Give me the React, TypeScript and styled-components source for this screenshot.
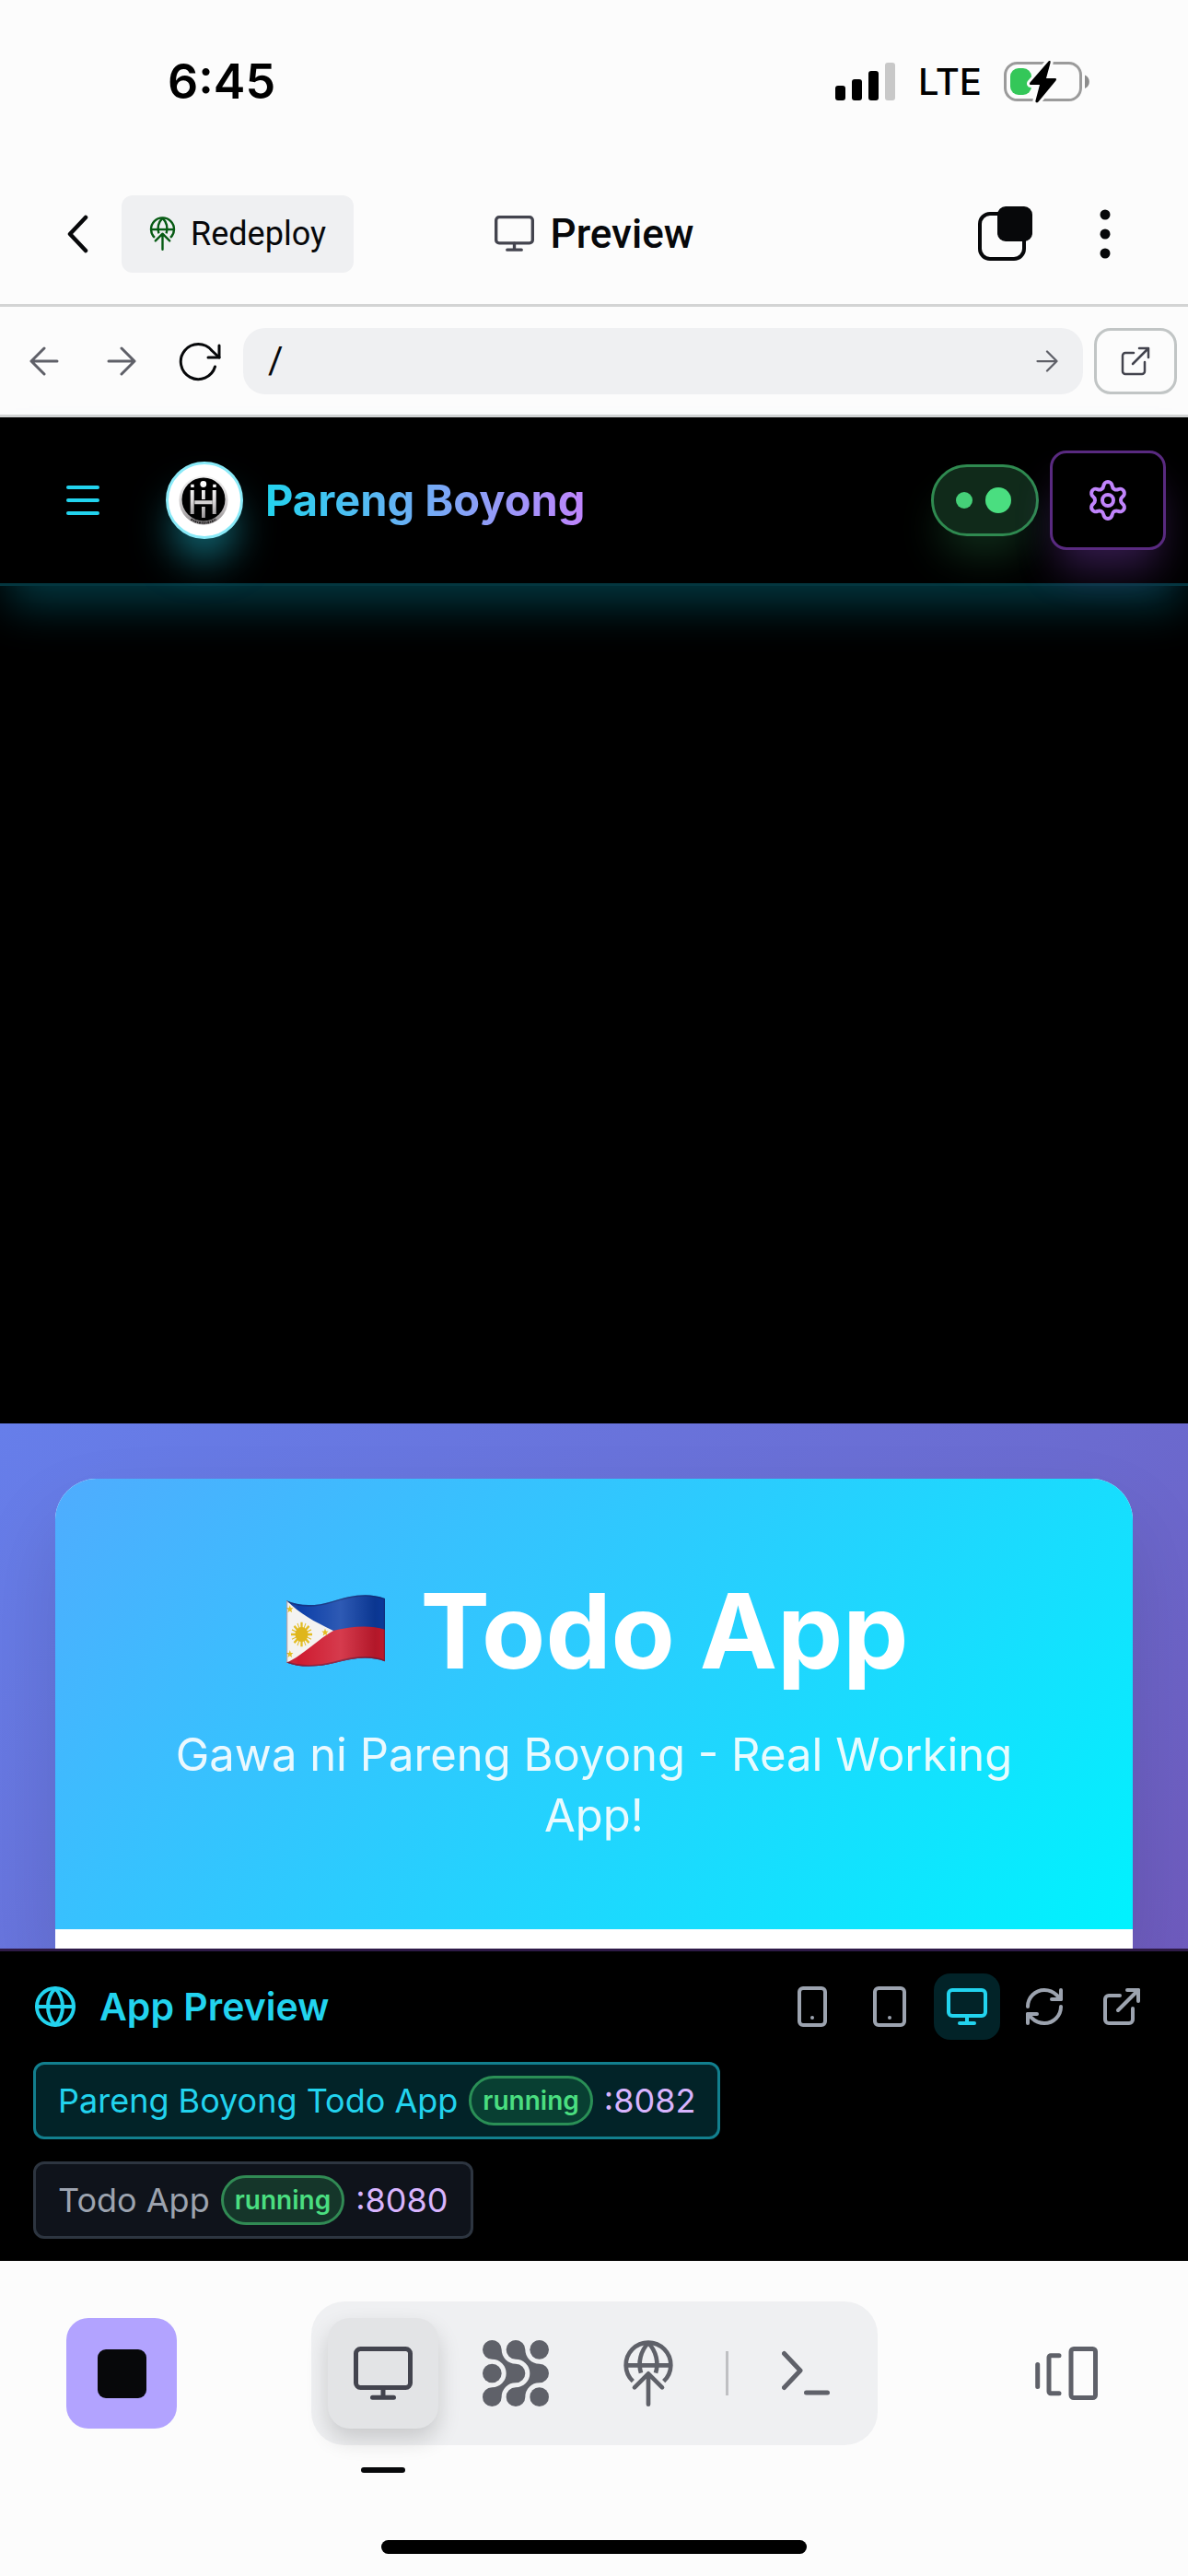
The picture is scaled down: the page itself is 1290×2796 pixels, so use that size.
import React from "react";
import styled, { createGlobalStyle, css } from "styled-components";
import { ExternalLink, Globe, Menu, Monitor, RefreshCw, Settings, Smartphone, Tablet } from "lucide-react";

const color = {
  surface: "#fcfcfc",
  soft: "#eff0f2",
  ink: "#07080a",
  icon: "#43444e",
  muted: "#5f6068",
  rule: "#d3d4d4",
  cyan: "#22d3ee",
  purple: "#c084fc",
  green: "#4ade80",
  gray: "#9ca3af",
};

const GlobalStyle = createGlobalStyle`
  *, *::before, *::after { box-sizing: border-box; }
  body { margin: 0; background: ${color.surface}; font-family: Inter, "Liberation Sans", sans-serif; }
  h1, h2, p { margin: 0; }
  button, input { font: inherit; color: inherit; }
  svg { display: block; flex: none; }
`;

const Page = styled.div`
  min-height: 100vh;
  display: flex;
  flex-direction: column;
`;

const plainButton = css`
  display: inline-flex;
  align-items: center;
  justify-content: center;
  padding: 0;
  border: 0;
  background: none;
  cursor: pointer;
`;

/* ---------- Phone status bar ---------- */

const StatusBar = styled.div`
  display: flex;
  align-items: center;
  justify-content: space-between;
  min-height: 177px;
  padding: 0 106px 0 182px;
  color: #000;
`;

const Clock = styled.time`
  font-size: 52px;
  line-height: 60px;
  font-weight: 600;
`;

const StatusIcons = styled.div`
  display: flex;
  align-items: center;
  gap: 24px;
`;

const Carrier = styled.span`
  font-size: 40px;
  line-height: 48px;
  font-weight: 500;
`;

/* ---------- Workspace bar ---------- */

const AppBar = styled.header`
  display: grid;
  grid-template-columns: 1fr auto 1fr;
  align-items: center;
  min-height: 156px;
  padding: 0 36px;
  border-bottom: 3px solid ${color.rule};
  color: ${color.ink};
  font-family: Roboto, "Liberation Sans", sans-serif;
`;

const BarSide = styled.div<{ $end?: boolean }>`
  display: flex;
  align-items: center;
  justify-content: ${(p) => (p.$end ? "flex-end" : "flex-start")};
`;

const BarButton = styled.button<{ $wide?: boolean }>`
  ${plainButton}
  width: ${(p) => (p.$wide ? "108px" : "96px")};
  height: 84px;
`;

const RedeployButton = styled.button`
  ${plainButton}
  gap: 10px;
  height: 84px;
  padding: 0 30px 0 24px;
  border-radius: 12px;
  background: ${color.soft};
  font-size: 36px;
  line-height: 48px;
`;

const BarTitle = styled.h1`
  display: flex;
  align-items: center;
  gap: 18px;
  font-size: 44px;
  line-height: 48px;
  font-weight: 500;

  svg {
    color: ${color.icon};
  }
`;

/* ---------- Address bar ---------- */

const AddressBar = styled.form`
  display: flex;
  align-items: center;
  min-height: 120px;
  padding: 0 12px 0 6px;
  border-bottom: 3px solid ${color.rule};
  color: ${color.muted};
`;

const NavButton = styled.button<{ $strong?: boolean }>`
  ${plainButton}
  width: 84px;
  height: 72px;
  color: ${(p) => (p.$strong ? color.ink : color.muted)};
`;

const AddressField = styled.div`
  flex: 1;
  display: flex;
  align-items: center;
  height: 72px;
  margin: 0 12px 0 6px;
  padding: 0 24px 0 27px;
  border-radius: 24px;
  background: ${color.soft};
`;

const AddressInput = styled.input`
  flex: 1;
  min-width: 0;
  padding: 0;
  border: 0;
  outline: 0;
  background: none;
  color: ${color.ink};
  font-family: Roboto, "Liberation Sans", sans-serif;
  font-size: 40px;
  line-height: 48px;
`;

const GoButton = styled.button`
  ${plainButton}
  width: 30px;
  height: 48px;
`;

const OpenLink = styled.a`
  display: flex;
  align-items: center;
  justify-content: center;
  width: 90px;
  height: 72px;
  border: 3px solid #c1c5c5;
  border-radius: 18px;
  color: ${color.icon};
`;

/* ---------- Previewed app ---------- */

const Preview = styled.main`
  flex: 1;
  display: flex;
  flex-direction: column;
  background: #000;
`;

const ChatHeader = styled.div`
  position: relative;
  z-index: 1;
  display: flex;
  align-items: center;
  min-height: 183px;
  padding: 0 24px 0 36px;
  border-bottom: 3px solid #04363f;
  box-shadow: 0 30px 45px -9px rgba(6, 182, 212, 0.3);
`;

const MenuButton = styled.button`
  ${plainButton}
  width: 108px;
  height: 108px;
  margin-right: 36px;
  color: ${color.cyan};
`;

const Avatar = styled.div`
  width: 84px;
  height: 84px;
  border: 3px solid #8aeaf8;
  border-radius: 50%;
  background: #fff;
  box-shadow: 0 30px 45px -9px rgba(34, 211, 238, 0.55);
`;

const Brand = styled.h2`
  margin-left: 24px;
  background: linear-gradient(90deg, ${color.cyan}, ${color.purple});
  background-clip: text;
  -webkit-background-clip: text;
  color: transparent;
  font-size: 47px;
  line-height: 60px;
  font-weight: 700;
`;

const StatusPill = styled.div`
  display: flex;
  align-items: center;
  gap: 14px;
  height: 78px;
  margin-left: auto;
  padding: 0 27px 0 24px;
  border: 3px solid #2f8a50;
  border-radius: 39px;
  background: #102a1a;
  box-shadow: 0 30px 45px -9px rgba(74, 222, 128, 0.2);
`;

const Dot = styled.span<{ $size: number }>`
  width: ${(p) => p.$size}px;
  height: ${(p) => p.$size}px;
  border-radius: 50%;
  background: ${color.green};
  opacity: ${(p) => (p.$size < 20 ? 0.92 : 1)};
`;

const SettingsButton = styled.button`
  ${plainButton}
  width: 126px;
  height: 108px;
  margin-left: 12px;
  border: 3px solid #592a80;
  border-radius: 18px;
  background: #000;
  color: ${color.purple};
  box-shadow: 0 30px 45px -9px rgba(168, 85, 247, 0.3);
`;

const ChatArea = styled.div`
  flex: 1;
`;

const TodoFrame = styled.section`
  padding: 60px 60px 0;
  overflow: hidden;
  background: linear-gradient(135deg, #667eea 0, #6b6bd0 850px, #6f5abd 1350px);
`;

const TodoCard = styled.div`
  overflow: hidden;
  border-radius: 45px 45px 0 0;
  background: #fff;
  box-shadow: 0 45px 90px rgba(0, 0, 0, 0.12);
`;

const TodoHero = styled.div`
  padding: 90px;
  background: linear-gradient(135deg, #4facfe, #00f2fe);
  color: #fff;
  text-align: center;
`;

const TodoTitle = styled.h2`
  display: flex;
  align-items: center;
  justify-content: center;
  gap: 30px;
  margin-bottom: 27px;
  font-size: 113px;
  line-height: 150px;
  font-weight: 700;
`;

const TodoSubtitle = styled.p`
  font-size: 49px;
  line-height: 66px;
  opacity: 0.9;
`;

const TodoBody = styled.div`
  height: 21px;
`;

/* ---------- App preview panel ---------- */

const Panel = styled.section`
  padding: 24px 36px;
  border-top: 3px solid #2e1a47;
  background: #000;
`;

const PanelHeader = styled.div`
  display: flex;
  align-items: center;
  justify-content: space-between;
  margin-bottom: 24px;
`;

const PanelTitle = styled.h2`
  display: flex;
  align-items: center;
  gap: 24px;
  color: ${color.cyan};
  font-size: 41px;
  line-height: 48px;
  font-weight: 600;
`;

const Tools = styled.div`
  display: flex;
  gap: 12px;
`;

const Tool = styled.button<{ $active?: boolean }>`
  ${plainButton}
  width: 72px;
  height: 72px;
  border-radius: 18px;
  background: ${(p) => (p.$active ? "#022328" : "none")};
  color: ${(p) => (p.$active ? color.cyan : color.gray)};
`;

const AppList = styled.div`
  display: flex;
  flex-direction: column;
  align-items: flex-start;
  gap: 24px;
`;

const AppTab = styled.button<{ $active?: boolean }>`
  ${plainButton}
  gap: 12px;
  height: 84px;
  padding: 0 24px;
  border: 3px solid ${(p) => (p.$active ? "#127f8e" : "#2d3540")};
  border-radius: 12px;
  background: ${(p) => (p.$active ? "#022328" : "#0f131b")};
  color: ${(p) => (p.$active ? color.cyan : color.gray)};
  font-size: 36px;
  line-height: 48px;
`;

const RunBadge = styled.span<{ $active?: boolean }>`
  display: inline-flex;
  align-items: center;
  height: 54px;
  padding: 0 12px;
  border: 3px solid ${(p) => (p.$active ? "#2a8f56" : "#318a54")};
  border-radius: 27px;
  background: ${(p) => (p.$active ? "#083f32" : "#15362a")};
  color: ${color.green};
  font-size: 28px;
  line-height: 36px;
  font-weight: 600;
`;

const Port = styled.span`
  color: #d8b4fe;
`;

/* ---------- Bottom dock ---------- */

const BottomBar = styled.nav`
  display: flex;
  align-items: center;
  justify-content: space-between;
  padding: 44px 72px 0;
`;

const StopButton = styled.button`
  ${plainButton}
  width: 120px;
  height: 120px;
  border-radius: 24px;
  background: #b2a3ff;
`;

const StopMark = styled.span`
  width: 53px;
  height: 53px;
  border-radius: 9px;
  background: ${color.ink};
`;

const Dock = styled.div`
  display: flex;
  align-items: center;
  gap: 24px;
  padding: 18px;
  border-radius: 36px;
  background: ${color.soft};
`;

const DockButton = styled.button<{ $active?: boolean }>`
  ${plainButton}
  position: relative;
  width: 120px;
  height: 120px;
  border-radius: 24px;
  color: ${(p) => (p.$active ? color.icon : "#5f6169")};
  ${(p) =>
    p.$active &&
    css`
      background: #e3e4e6;
      box-shadow: 0 12px 24px rgba(0, 0, 0, 0.16);
      &::after {
        content: "";
        position: absolute;
        top: 162px;
        left: 36px;
        width: 48px;
        height: 6px;
        border-radius: 3px;
        background: ${color.ink};
      }
    `}
`;

const DockRule = styled.span`
  width: 3px;
  height: 48px;
  background: #bfc0c3;
`;

const HomeArea = styled.footer`
  display: flex;
  justify-content: center;
  padding: 103px 0 24px;
`;

const HomeIndicator = styled.span`
  width: 462px;
  height: 15px;
  border-radius: 8px;
  background: #000;
`;

/* ---------- Drawings ---------- */

const SignalIcon = () => (
  <svg width="66" height="42" viewBox="0 0 66 42" aria-label="Signal">
    <rect x="0" y="25" width="11" height="16" rx="3" />
    <rect x="18" y="18" width="11" height="23" rx="3" />
    <rect x="36" y="9" width="11" height="32" rx="3" />
    <rect x="54" y="0" width="11" height="41" rx="3" fill="#c8c8c8" />
  </svg>
);

const BatteryIcon = () => (
  <svg width="94" height="46" viewBox="0 0 94 46" aria-label="Battery charging">
    <rect x="1.5" y="2.5" width="82" height="40" rx="13" fill="none" stroke="#9b9b9b" strokeWidth="3" />
    <path d="M88 15.500c6.500 2.500 6.500 12 0 14.500z" fill="#8c8c8c" />
    <rect x="7" y="8" width="23" height="29" rx="9" fill="#34c759" />
    <path
      d="M49 0 28.500 23.500c-1 1.500-.5 2.500 1 2.500H39L34.500 43c-.5 2.500 1.500 3 3 1.500L56.500 21.500c1-1.500.5-2.500-1-2.500H46L50.500 2.500C51 0 50-1 49 0z"
      stroke={color.surface}
      strokeWidth="6"
      paintOrder="stroke"
    />
  </svg>
);

const ChevronIcon = () => (
  <svg width="24" height="42" viewBox="0 0 24 42" fill="none" stroke="currentColor" strokeWidth="4.500" strokeLinecap="round" strokeLinejoin="round">
    <path d="M21 3 4 21l17 18" />
  </svg>
);

const DeployIcon = ({ size }: { size: number }) => (
  <svg width={size} height={size} viewBox="0 0 240 240" fill="none" stroke="currentColor" strokeWidth="14" strokeLinecap="butt">
    <path d="M70 146A73 73 0 1 1 170 146" />
    <path d="M47 94h146" />
    <path d="M120 21C94 48 86 86 96 119M120 21c26 27 34 65 24 98" />
    <path d="M75 166l45-45 45 45M120 122v99" strokeLinecap="round" strokeLinejoin="round" />
  </svg>
);

const ScreenIcon = ({ width }: { width: number }) => (
  <svg width={width} viewBox="0 0 64 58" fill="none" stroke="currentColor" strokeWidth="5" strokeLinecap="round">
    <rect x="2.500" y="2.500" width="59" height="42" rx="5" />
    <path d="M32 45v10M20.500 55.300h23" />
  </svg>
);

const WindowsIcon = () => (
  <svg width="60" height="60" viewBox="0 0 60 60">
    <rect x="2" y="8" width="48" height="49" rx="11" fill="none" stroke="currentColor" strokeWidth="4" />
    <rect x="21" y="0" width="38" height="38" rx="9" fill="currentColor" />
  </svg>
);

const DotsIcon = () => (
  <svg width="12" height="54" viewBox="0 0 12 54" fill="currentColor">
    <circle cx="6" cy="6" r="5.500" />
    <circle cx="6" cy="27" r="5.500" />
    <circle cx="6" cy="48" r="5.500" />
  </svg>
);

const ArrowIcon = ({ size, back }: { size: number; back?: boolean }) => (
  <svg width={size} height={size} viewBox="0 0 32 32" fill="none" stroke="currentColor" strokeWidth="3" strokeLinecap="round" strokeLinejoin="round">
    <path d={back ? "M30 16H2M16 2 2 16l14 14" : "M2 16h28M16 2l14 14-14 14"} />
  </svg>
);

const ReloadIcon = () => (
  <svg width="50" height="44" viewBox="-4 0 50 44" fill="none" stroke="currentColor" strokeWidth="3" strokeLinecap="round" strokeLinejoin="round">
    <path d="M38.500 28A19 19 0 1 1 35 10.500L43 18" />
    <path d="M43 5v13H31" />
  </svg>
);

const OpenIcon = () => (
  <svg width="32" height="32" viewBox="0 0 32 32" fill="none" stroke="currentColor" strokeWidth="2.500" strokeLinecap="round" strokeLinejoin="round">
    <path d="M14 7H5a3 3 0 0 0-3 3v17a3 3 0 0 0 3 3h18a3 3 0 0 0 3-3V17" />
    <path d="M20 2h10v10M30 2 13 19" />
  </svg>
);

const LogoMark = () => (
  <svg width="78" height="78" viewBox="3 3 78 78" role="img" aria-label="Pareng Boyong logo">
    <defs>
      <linearGradient id="rim" x1="0" y1="0" x2="0" y2="1">
        <stop offset="0" stopColor="#f4f4f4" />
        <stop offset="0.600" stopColor="#c9c6c7" />
        <stop offset="1" stopColor="#8d898b" />
      </linearGradient>
      <linearGradient id="bars" gradientUnits="userSpaceOnUse" x1="0" y1="24" x2="0" y2="61">
        <stop offset="0" stopColor="#fff" />
        <stop offset="0.500" stopColor="#dcd9da" />
        <stop offset="1" stopColor="#9a9698" />
      </linearGradient>
    </defs>
    <circle cx="41" cy="42" r="26.500" fill="url(#rim)" />
    <circle cx="41" cy="41" r="23.500" fill="#000" />
    <path d="M27.500 62.500A25 25 0 0 0 54.500 62.500" fill="none" stroke="#2a2829" strokeWidth="2.500" strokeDasharray="2 0.700 1.300 0.600" />
    <g fill="url(#bars)">
      <path d="M26.700 31h4v26h-4zM50.700 31h4v26h-4zM39 31h3.800v10H39z" />
      <path d="M31.300 42.300h19.400v4H31.300zM39 49h3.800v12H39z" />
      <path d="M27.200 24.700h3.500V28h-3.500zM51.200 24.700h3.500V28h-3.500z" />
      <circle cx="40.800" cy="24.500" r="3.400" />
    </g>
  </svg>
);

const starPath = "M0-3.600 1-1.100 3.600-1 1.600.7 2.300 3.200 0 1.800-2.300 3.200-1.600.7-3.600-1-1-1.100z";

const FlagIcon = () => (
  <svg width="123" height="78" viewBox="-8 0 123 68" preserveAspectRatio="none" role="img" aria-label="Flag of the Philippines">
    <defs>
      <linearGradient id="shade">
        <stop offset="0" stopColor="#000" stopOpacity="0.180" />
        <stop offset="0.120" stopColor="#fff" stopOpacity="0" />
        <stop offset="0.550" stopColor="#fff" stopOpacity="0.140" />
        <stop offset="0.900" stopColor="#000" stopOpacity="0.140" />
        <stop offset="1" stopColor="#000" stopOpacity="0.080" />
      </linearGradient>
      <clipPath id="flagShape">
        <path d="M0 5.500C14 11 32 11 50 6 68 1 88-3 107 3.500V63C90 57 70 60 52 64.500 34 68.500 14 69 0 64z" />
      </clipPath>
    </defs>
    <g clipPath="url(#flagShape)">
      <path d="M0 0h107v68H0z" fill="#0c3fa8" />
      <path d="M0 40 50 34C70 30 90 28 107 33v35H0z" fill="#cf1b30" />
      <path d="M0 0h107v68H0z" fill="url(#shade)" />
      <path d="M0 5C14 18 30 25 51 34 34 42 20 56 0 64.500z" fill="#f4f3f1" />
      <g stroke="#e3bd24" strokeWidth="2.300">
        <path d="M16.500 26v23M5 37.500h23M8.500 29.500l16 16M24.500 29.500l-16 16" />
        <path d="M12 27l9 21M21 27l-9 21M6 33l21 9M27 33 6 42" strokeWidth="1" />
      </g>
      <circle cx="16.500" cy="37.500" r="7" fill="#dfb61c" />
      <g fill="#e3bd24">
        <path transform="translate(3.800 13.500)" d={starPath} />
        <path transform="translate(42 35.500)" d={starPath} />
        <path transform="translate(3.800 56)" d={starPath} />
      </g>
      <path d="M0 5.500C14 11 32 11 50 6 68 1 88-3 107 3.500V63C90 57 70 60 52 64.500 34 68.500 14 69 0 64z" fill="none" stroke="#1a1a40" strokeOpacity="0.350" strokeWidth="2.500" />
    </g>
  </svg>
);

const strand = "M62 31A46 46 0 0 0 108 77 31 31 0 0 1 108 139 46 46 0 0 0 62 185 31 31 0 1 1 31 154 46 46 0 0 0 31 62 31 31 0 1 1 62 31z";

const AgentIcon = () => (
  <svg width="72" height="72" viewBox="0 0 216 216" fill="currentColor">
    <path d={strand} />
    <path d={strand} transform="translate(77 0)" />
    <circle cx="185" cy="31" r="31" />
    <circle cx="31" cy="108" r="31" />
    <circle cx="185" cy="185" r="31" />
  </svg>
);

const ShellIcon = () => (
  <svg width="52" height="52" viewBox="0 0 52 52" fill="none" stroke="currentColor" strokeWidth="5" strokeLinecap="round" strokeLinejoin="round">
    <path d="M2.500 4.500 20 23 2.500 41.500M26.500 47h23" />
  </svg>
);

const PanesIcon = () => (
  <svg width="68" height="58" viewBox="0 0 68 58" fill="none" stroke="currentColor" strokeWidth="5" strokeLinecap="round" strokeLinejoin="round">
    <path d="M2.700 19.500v24M26 9.700H17a2 2 0 0 0-2 2v37a2 2 0 0 0 2 2h9" />
    <rect x="39" y="2.500" width="26.500" height="53" rx="3" />
  </svg>
);

const PanesButton = styled.button`
  ${plainButton}
  width: 120px;
  height: 120px;
  color: #5f6169;
`;

const DeployTint = styled.span`
  color: #075b14;
`;

const apps = [
  { name: "Pareng Boyong Todo App", port: 8082, active: true },
  { name: "Todo App", port: 8080, active: false },
];

export default function App() {
  return (
    <Page>
      <GlobalStyle />
      <StatusBar>
        <Clock>6:45</Clock>
        <StatusIcons>
          <SignalIcon />
          <Carrier>LTE</Carrier>
          <BatteryIcon />
        </StatusIcons>
      </StatusBar>

      <AppBar>
        <BarSide>
          <BarButton aria-label="Back">
            <ChevronIcon />
          </BarButton>
          <RedeployButton>
            <DeployTint>
              <DeployIcon size={41} />
            </DeployTint>
            Redeploy
          </RedeployButton>
        </BarSide>
        <BarTitle>
          <ScreenIcon width={43} />
          Preview
        </BarTitle>
        <BarSide $end>
          <BarButton aria-label="Tabs" $wide>
            <WindowsIcon />
          </BarButton>
          <BarButton aria-label="More" $wide>
            <DotsIcon />
          </BarButton>
        </BarSide>
      </AppBar>

      <AddressBar onSubmit={(e) => e.preventDefault()}>
        <NavButton type="button" aria-label="Go back">
          <ArrowIcon size={32} back />
        </NavButton>
        <NavButton type="button" aria-label="Go forward">
          <ArrowIcon size={32} />
        </NavButton>
        <NavButton type="button" aria-label="Reload" $strong>
          <ReloadIcon />
        </NavButton>
        <AddressField>
          <AddressInput aria-label="Path" defaultValue="/" />
          <GoButton type="submit" aria-label="Go">
            <ArrowIcon size={24} />
          </GoButton>
        </AddressField>
        <OpenLink href="#" aria-label="Open in new tab">
          <OpenIcon />
        </OpenLink>
      </AddressBar>

      <Preview>
        <ChatHeader>
          <MenuButton aria-label="Menu">
            <Menu size={48} />
          </MenuButton>
          <Avatar>
            <LogoMark />
          </Avatar>
          <Brand>Pareng Boyong</Brand>
          <StatusPill>
            <Dot $size={18} />
            <Dot $size={28} />
          </StatusPill>
          <SettingsButton aria-label="Settings">
            <Settings size={48} />
          </SettingsButton>
        </ChatHeader>
        <ChatArea />
        <TodoFrame>
          <TodoCard>
            <TodoHero>
              <TodoTitle>
                <FlagIcon />
                Todo App
              </TodoTitle>
              <TodoSubtitle>Gawa ni Pareng Boyong - Real Working App!</TodoSubtitle>
            </TodoHero>
            <TodoBody />
          </TodoCard>
        </TodoFrame>
      </Preview>

      <Panel>
        <PanelHeader>
          <PanelTitle>
            <Globe size={48} />
            App Preview
          </PanelTitle>
          <Tools>
            <Tool aria-label="Phone size">
              <Smartphone size={48} />
            </Tool>
            <Tool aria-label="Tablet size">
              <Tablet size={48} />
            </Tool>
            <Tool aria-label="Desktop size" $active>
              <Monitor size={48} />
            </Tool>
            <Tool aria-label="Refresh">
              <RefreshCw size={48} />
            </Tool>
            <Tool aria-label="Open app">
              <ExternalLink size={48} />
            </Tool>
          </Tools>
        </PanelHeader>
        <AppList>
          {apps.map((app) => (
            <AppTab key={app.port} $active={app.active}>
              <span>{app.name}</span>
              <RunBadge $active={app.active}>running</RunBadge>
              <Port>:{app.port}</Port>
            </AppTab>
          ))}
        </AppList>
      </Panel>

      <BottomBar>
        <StopButton aria-label="Stop">
          <StopMark />
        </StopButton>
        <Dock>
          <DockButton aria-label="Preview" $active>
            <ScreenIcon width={64} />
          </DockButton>
          <DockButton aria-label="Agent">
            <AgentIcon />
          </DockButton>
          <DockButton aria-label="Deploy">
            <DeployIcon size={80} />
          </DockButton>
          <DockRule />
          <DockButton aria-label="Shell">
            <ShellIcon />
          </DockButton>
        </Dock>
        <PanesButton aria-label="Panes">
          <PanesIcon />
        </PanesButton>
      </BottomBar>
      <HomeArea>
        <HomeIndicator />
      </HomeArea>
    </Page>
  );
}
